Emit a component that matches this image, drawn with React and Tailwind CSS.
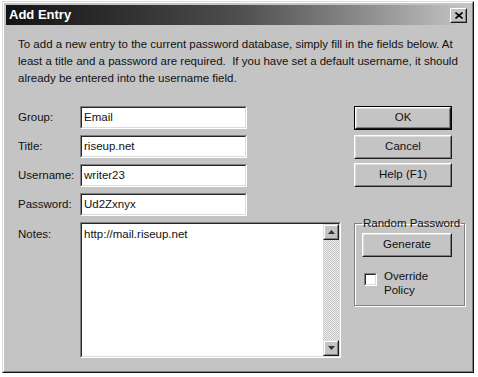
import React from 'react'

const font = { fontFamily: '"Liberation Sans", Arial, sans-serif' }

function Sunken({ className = '', children }) {
  return (
    <div className={`border border-t-[#808080] border-l-[#808080] border-b-white border-r-white ${className}`}>
      <div className="h-full w-full border border-t-[#262626] border-l-[#262626] border-b-[#dcdcdc] border-r-[#dcdcdc] bg-white">
        {children}
      </div>
    </div>
  )
}

function Button({ label, isDefault, className = '' }) {
  const inner = (
    <div className="h-full w-full border border-t-white border-l-white border-b-[#1c1c1c] border-r-[#1c1c1c]">
      <div className="flex h-full w-full items-center justify-center border border-t-[#dedede] border-l-[#dedede] border-b-[#7e7e7e] border-r-[#7e7e7e] text-[11.5px] text-[#111]">
        {label}
      </div>
    </div>
  )
  if (isDefault) {
    return <div className={`border border-black ${className}`}>{inner}</div>
  }
  return <div className={className}>{inner}</div>
}

function ScrollButton({ up }) {
  return (
    <div className="h-[16px] w-[16px] border border-t-[#dedede] border-l-[#dedede] border-b-[#1c1c1c] border-r-[#1c1c1c] bg-[#c4c4c4]">
      <div className="flex h-full w-full items-center justify-center border border-t-white border-l-white border-b-[#808080] border-r-[#808080]">
        <svg width="7" height="4" viewBox="0 0 7 4">
          {up ? <path d="M3.5 0 L7 4 L0 4 Z" fill="#333" /> : <path d="M0 0 L7 0 L3.5 4 Z" fill="#333" />}
        </svg>
      </div>
    </div>
  )
}

function Field({ label, value }) {
  return (
    <div className="flex items-center">
      <div className="w-[62px] text-[11.5px] text-[#111]">{label}</div>
      <Sunken className="h-[23px] w-[167px]">
        <div className="flex h-full items-center px-[2px] text-[11.5px] text-[#111]">{value}</div>
      </Sunken>
    </div>
  )
}

export default function App() {
  return (
    <div className="h-[377px] w-[478px] bg-white pl-[2px] pt-[1px]" style={font}>
      <div className="h-[372px] w-[472px] border border-t-[#dcdcdc] border-l-[#dcdcdc] border-b-[#111] border-r-[#111] bg-[#c4c4c4]">
        <div className="h-full w-full border border-t-white border-l-white border-b-[#808080] border-r-[#808080] p-[2px]">
          <div className="flex h-[20px] items-center justify-between bg-gradient-to-r from-[#141414] via-[#4e4e4e] to-[#c6c6c6] pl-[3px] pr-[3px]">
            <span className="text-[13px] font-bold text-white">Add Entry</span>
            <div className="h-[15px] w-[17px] border border-t-white border-l-white border-b-[#1c1c1c] border-r-[#1c1c1c] bg-[#c4c4c4]">
              <div className="flex h-full w-full items-center justify-center border border-b-[#808080] border-r-[#808080] border-t-transparent border-l-transparent">
                <svg width="8" height="7" viewBox="0 0 8 7">
                  <path d="M0.5 0.5 L7.5 6.5 M7.5 0.5 L0.5 6.5" stroke="#000" strokeWidth="1.6" />
                </svg>
              </div>
            </div>
          </div>

          <p className="mt-[11px] pl-[12px] pr-[8px] text-[11.5px] leading-[17px] text-[#111]">
            To add a new entry to the current password database, simply fill in the fields below. At least a title and a password are required.&nbsp; If you have set a default username, it should already be entered into the username field.
          </p>

          <div className="mt-[19px] flex pl-[12px]">
            <div className="flex flex-col gap-[6px]">
              <Field label="Group:" value="Email" />
              <Field label="Title:" value="riseup.net" />
              <Field label="Username:" value="writer23" />
              <Field label="Password:" value="Ud2Zxnyx" />
              <div className="flex items-start">
                <div className="w-[62px] pt-[4px] text-[11.5px] text-[#111]">Notes:</div>
                <Sunken className="h-[136px] w-[261px]">
                  <div className="flex h-full">
                    <div className="flex-1 px-[2px] pt-[2px] text-[11.5px] text-[#111]">http://mail.riseup.net</div>
                    <div className="flex w-[16px] flex-col justify-between bg-[repeating-conic-gradient(#c4c4c4_0%_25%,#eeeeee_0%_50%)] bg-[length:2px_2px]">
                      <ScrollButton up />
                      <ScrollButton />
                    </div>
                  </div>
                </Sunken>
              </div>
            </div>

            <div className="ml-[13px] flex flex-col">
              <Button label="OK" isDefault className="h-[24px] w-[98px]" />
              <Button label="Cancel" className="mt-[5px] h-[24px] w-[98px]" />
              <Button label="Help (F1)" className="mt-[4px] h-[24px] w-[98px]" />
              <fieldset className="mt-[30px] h-[89px] w-[111px] border border-[#808080] shadow-[1px_1px_0_#fff,inset_1px_1px_0_#fff] pl-[7px]">
                <legend className="whitespace-nowrap px-[1px] text-[11.5px] leading-[12px] text-[#111]">Random Password</legend>
                <Button label="Generate" className="mt-[4px] h-[24px] w-[90px]" />
                <div className="mt-[12px] flex items-start gap-[7px] pl-[2px]">
                  <Sunken className="mt-[4px] h-[13px] w-[13px]" />
                  <div className="text-[11.5px] leading-[14px] text-[#111]">Override<br />Policy</div>
                </div>
              </fieldset>
            </div>
          </div>
        </div>
      </div>
    </div>
  )
}
